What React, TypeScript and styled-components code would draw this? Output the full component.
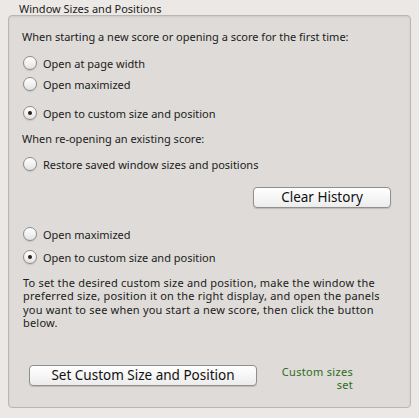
import React from "react";
import styled, { createGlobalStyle } from "styled-components";

const Global = createGlobalStyle`
  html, body { margin: 0; padding: 0; }
  body {
    background: #ebe8e5;
    font-family: "Lucida Grande", "Noto Sans", "DejaVu Sans", sans-serif;
    font-size: 11px;
    color: #1b1b1b;
    width: 419px;
    height: 418px;
    overflow: hidden;
  }
`;

const Page = styled.div`
  display: flex;
  flex-direction: column;
  padding: 0 8px;
  width: 419px;
  box-sizing: border-box;
`;

const GroupTitle = styled.div`
  height: 15px;
  line-height: 18px;
  padding-left: 11px;
  font-size: 11px;
  color: #1b1b1b;
`;

const GroupBox = styled.div`
  display: flex;
  flex-direction: column;
  height: 393px;
  box-sizing: border-box;
  border: 1px solid #b9b6b3;
  border-radius: 4px;
  background: #dedbd8;
  box-shadow: inset 0 1px 2px rgba(0, 0, 0, 0.08);
  padding: 13px 19px 0 13px;
`;

const Heading = styled.div<{ $mt?: number }>`
  height: 16px;
  line-height: 16px;
  margin-top: ${(p) => p.$mt ?? 0}px;
`;

const RadioRow = styled.label<{ $mt?: number }>`
  display: flex;
  align-items: center;
  height: 18px;
  gap: 6px;
  margin-top: ${(p) => p.$mt ?? 0}px;
  padding-left: 1px;
`;

const RadioCircle = styled.span<{ $on?: boolean }>`
  position: relative;
  width: 14px;
  height: 14px;
  border-radius: 50%;
  box-sizing: border-box;
  border: 1px solid #8d8d8d;
  background: linear-gradient(#ffffff, #f1f1f1 55%, #e2e2e2);
  box-shadow: 0 1px 1px rgba(0, 0, 0, 0.12);
  flex: none;
  &::after {
    content: "";
    display: ${(p) => (p.$on ? "block" : "none")};
    position: absolute;
    left: 4px;
    top: 4px;
    width: 4px;
    height: 4px;
    border-radius: 50%;
    background: #222;
  }
`;

const ButtonRow = styled.div<{ $mt?: number }>`
  display: flex;
  justify-content: flex-end;
  margin-top: ${(p) => p.$mt ?? 0}px;
`;

const PushButton = styled.button<{ $w: number }>`
  width: ${(p) => p.$w}px;
  height: 21px;
  box-sizing: border-box;
  border: 1px solid #8f8f8f;
  border-radius: 4px;
  background: linear-gradient(#ffffff, #f6f6f6 50%, #ececec);
  box-shadow: 0 1px 1px rgba(0, 0, 0, 0.15);
  font-family: "Lucida Grande", "Noto Sans", "DejaVu Sans", sans-serif;
  font-size: 13.5px;
  color: #111;
  padding: 0;
  line-height: 19px;
`;

const Paragraph = styled.p<{ $mt?: number }>`
  margin: ${(p) => p.$mt ?? 0}px 0 0 1px;
  line-height: 13.4px;
  letter-spacing: 0.2px;
  white-space: nowrap;
`;

const BottomRow = styled.div<{ $mt?: number }>`
  display: flex;
  align-items: flex-start;
  margin-top: ${(p) => p.$mt ?? 0}px;
  padding-left: 7px;
`;

const Status = styled.div`
  margin-left: 23px;
  margin-top: 0px;
  width: 73px;
  text-align: right;
  color: #2f6b1c;
  line-height: 13px;
  letter-spacing: 0.3px;
`;

const Radio = ({ on, label, mt }: { on?: boolean; label: string; mt?: number }) => (
  <RadioRow $mt={mt}>
    <RadioCircle $on={on} />
    <span>{label}</span>
  </RadioRow>
);

export default function App() {
  return (
    <>
      <Global />
      <Page>
        <GroupTitle>Window Sizes and Positions</GroupTitle>
        <GroupBox>
          <Heading>When starting a new score or opening a score for the first time:</Heading>
          <Radio mt={9} label="Open at page width" />
          <Radio mt={3} label="Open maximized" />
          <Radio mt={11} on label="Open to custom size and position" />
          <Heading $mt={9}>When re-opening an existing score:</Heading>
          <Radio mt={8} label="Restore saved window sizes and positions" />
          <ButtonRow $mt={14}>
            <PushButton $w={138}>Clear History</PushButton>
          </ButtonRow>
          <Radio mt={17} label="Open maximized" />
          <Radio mt={5} on label="Open to custom size and position" />
          <Paragraph $mt={10}>
            To set the desired custom size and position, make the window the
            <br />
            preferred size, position it on the right display, and open the panels
            <br />
            you want to see when you start a new score, then click the button
            <br />
            below.
          </Paragraph>
          <BottomRow $mt={35}>
            <PushButton $w={228}>Set Custom Size and Position</PushButton>
            <Status>
              Custom sizes
              <br />
              set
            </Status>
          </BottomRow>
        </GroupBox>
      </Page>
    </>
  );
}
